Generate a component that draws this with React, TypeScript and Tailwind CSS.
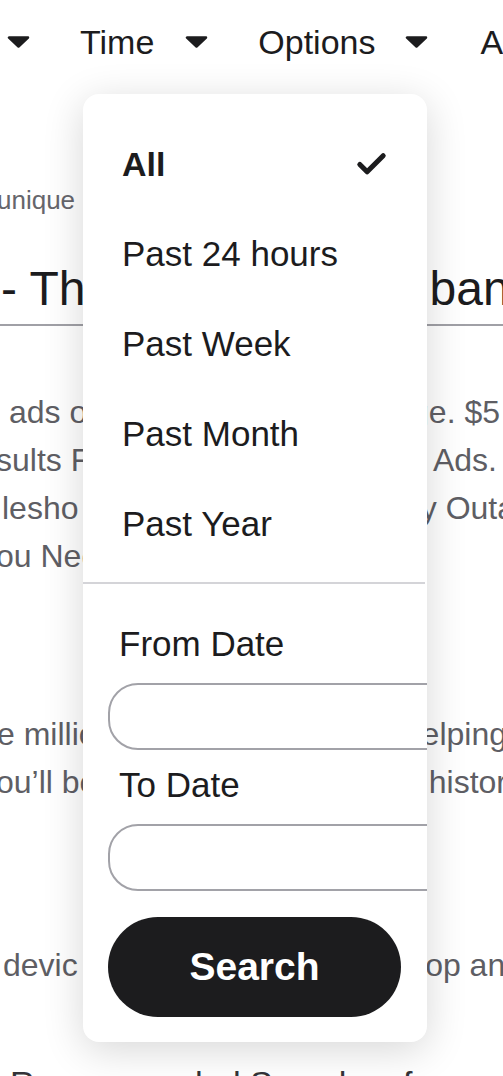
import { Check } from "lucide-react";

function Caret({ className = "" }: { className?: string }) {
  return (
    <svg width="23" height="12" viewBox="0 0 23 12" className={"shrink-0 " + className} aria-hidden="true">
      <path d="M2 1.5h19L11.5 10.5z" fill="#1c1c1e" stroke="#1c1c1e" strokeWidth="2.5" strokeLinejoin="round" />
    </svg>
  );
}

const times = ["Past 24 hours", "Past Week", "Past Month", "Past Year"];

export default function App() {
  return (
    <div
      className="relative h-[1076px] w-[503px] overflow-hidden bg-white text-[#1c1c1e]"
      style={{ fontFamily: '"Liberation Sans", Arial, sans-serif' }}
    >
      {/* page behind the dropdown */}
      <div className="flex h-[84px] items-center whitespace-nowrap pl-[7px] text-[34px]">
        <Caret />
        <span className="ml-[50px] shrink-0">Time</span>
        <Caret className="ml-[31px]" />
        <span className="ml-[50px] shrink-0">Options</span>
        <Caret className="ml-[30px]" />
        <span className="ml-[52px] shrink-0">Advanced</span>
      </div>

      <div className="mt-[100px] flex h-[32px] items-center whitespace-nowrap text-[26px] text-[#66666c]">
        <span className="-ml-[3px]">unique</span>
      </div>

      <div className="mt-[45px] flex h-[56px] items-center justify-between whitespace-nowrap text-[48px] leading-[56px]">
        <span className="ml-[1px] shrink-0">- The</span>
        <span className="-mr-[76px] shrink-0">banner</span>
      </div>
      <div className="mt-[7px] h-[2px] bg-[#a0a0a6]" />

      <div className="mt-[62px] whitespace-nowrap text-[32px] leading-[48px] text-[#5e5e64]">
        <div className="flex justify-between">
          <span className="ml-[9px] shrink-0">ads on</span>
          <span className="mr-[3px] shrink-0">ge. $5</span>
        </div>
        <div className="flex justify-between">
          <span className="-ml-[4px] shrink-0">sults Fr</span>
          <span className="mr-[6px] shrink-0">Ads.</span>
        </div>
        <div className="flex justify-between">
          <span className="ml-[2px] shrink-0">lesho</span>
          <span className="-mr-[12px] shrink-0">y Outa</span>
        </div>
        <div className="flex justify-between">
          <span className="-ml-[4px] shrink-0">ou Need</span>
        </div>
      </div>

      <div className="mt-[130px] whitespace-nowrap text-[32px] leading-[48px] text-[#5e5e64]">
        <div className="flex justify-between">
          <span className="-ml-[3px] shrink-0">e millio</span>
          <span className="-mr-[4px] shrink-0">helping</span>
        </div>
        <div className="flex justify-between">
          <span className="-ml-[4px] shrink-0">ou’ll be</span>
          <span className="-mr-[20px] shrink-0">history</span>
        </div>
      </div>

      <div className="mt-[135px] flex justify-between whitespace-nowrap text-[32px] leading-[48px] text-[#5e5e64]">
        <span className="ml-[3px] shrink-0">devic</span>
        <span className="-mr-[20px] shrink-0">top and</span>
      </div>

      <div className="mt-[74px] whitespace-nowrap pl-[10px] text-[34px] leading-[40px] text-[#333338]">
        Recommended Searches for
      </div>

      {/* time dropdown */}
      <div className="absolute left-[83px] top-[94px] h-[948px] w-[344px] overflow-hidden rounded-[16px] bg-white shadow-[0_8px_40px_rgba(0,0,0,0.16)]">
        <div className="pt-[25px]">
          <div className="flex h-[90px] items-center justify-between pl-[39px] pr-[38px] text-[34px] font-bold">
            <span>All</span>
            <Check size={35} strokeWidth={3.5} />
          </div>
          {times.map((t) => (
            <div key={t} className="flex h-[90px] items-center pl-[39px] text-[35px]">
              {t}
            </div>
          ))}
        </div>
        <div className="mt-[13px] h-[2px] w-[342px] bg-[#d4d4d8]" />

        <div className="px-[25px]">
          <div className="mt-[40px] pl-[11px] text-[35px] leading-[40px]">From Date</div>
          <div className="mt-[19px] h-[67px] w-[360px] shrink-0 rounded-[30px] border-2 border-[#a2a2a8]" />
          <div className="mt-[15px] pl-[11px] text-[35px] leading-[40px]">To Date</div>
          <div className="mt-[19px] h-[67px] w-[360px] shrink-0 rounded-[30px] border-2 border-[#a2a2a8]" />
          <button className="mt-[26px] flex h-[100px] w-[293px] items-center justify-center rounded-full bg-[#1c1c1e] text-[39px] font-bold text-white">
            Search
          </button>
        </div>
      </div>
    </div>
  );
}
